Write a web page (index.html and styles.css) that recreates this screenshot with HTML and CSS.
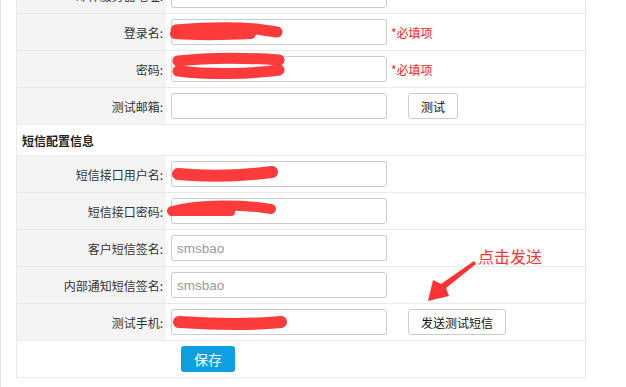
FILE: index.html
```html
<!DOCTYPE html>
<html>
<head>
    <title>短信配置</title>
    <link rel="stylesheet" href="styles.css">
</head>
<body>
    <div class="page">
        <div class="form-table">
            <div class="row">
                <div class="label">邮件服务器地址:</div>
                <div class="value"><input type="text" class="text-input"></div>
            </div>
            <div class="row">
                <div class="label">登录名:</div>
                <div class="value">
                    <div class="field">
                        <input type="text" class="text-input">
                        <svg class="scribble" width="216" height="26">
                            <path d="M5,11 C30,9 60,8 85,10 L106,13" stroke-width="11"/>
                            <path d="M4,15 C30,17 60,16 80,15" stroke-width="10"/>
                        </svg>
                    </div>
                    <span class="required">*必填项</span>
                </div>
            </div>
            <div class="row">
                <div class="label">密码:</div>
                <div class="value">
                    <div class="field">
                        <input type="password" class="text-input">
                        <svg class="scribble" width="216" height="26">
                            <path d="M7,5 C40,1 80,2 108,4" stroke-width="11"/>
                            <path d="M7,15 C40,19 80,18 108,14" stroke-width="11"/>
                        </svg>
                    </div>
                    <span class="required">*必填项</span>
                </div>
            </div>
            <div class="row">
                <div class="label">测试邮箱:</div>
                <div class="value">
                    <input type="text" class="text-input">
                    <button class="btn btn-test">测试</button>
                </div>
            </div>
            <div class="row section">短信配置信息</div>
            <div class="row">
                <div class="label">短信接口用户名:</div>
                <div class="value">
                    <div class="field">
                        <input type="text" class="text-input">
                        <svg class="scribble" width="216" height="26">
                            <path d="M7,13 C40,16 70,15 101,11" stroke-width="12"/>
                        </svg>
                    </div>
                </div>
            </div>
            <div class="row">
                <div class="label">短信接口密码:</div>
                <div class="value">
                    <div class="field">
                        <input type="password" class="text-input">
                        <svg class="scribble" width="216" height="26">
                            <path d="M1,13 C30,6 70,6 100,11" stroke-width="10"/>
                            <path d="M1,14 L60,14" stroke-width="8"/>
                        </svg>
                    </div>
                </div>
            </div>
            <div class="row">
                <div class="label">客户短信签名:</div>
                <div class="value"><input type="text" class="text-input" placeholder="smsbao"></div>
            </div>
            <div class="row">
                <div class="label">内部通知短信签名:</div>
                <div class="value"><input type="text" class="text-input" placeholder="smsbao"></div>
            </div>
            <div class="row">
                <div class="label">测试手机:</div>
                <div class="value">
                    <div class="field">
                        <input type="text" class="text-input">
                        <svg class="scribble" width="216" height="26">
                            <path d="M8,13 C40,15 80,16 110,13" stroke-width="12"/>
                        </svg>
                    </div>
                    <button class="btn btn-test">发送测试短信</button>
                </div>
            </div>
            <div class="row actions">
                <button class="btn-save">保存</button>
            </div>
        </div>

        <div class="note">点击发送</div>
        <svg class="arrow" width="64" height="50">
            <polygon points="54,5 56,8 26,32 29,40 8,45 13,24 21,28"/>
        </svg>
    </div>
</body>
</html>
```

FILE: styles.css
```css
body {
    margin: 0;
    padding: 0;
    background-color: #fff;
    font-family: "Noto Sans CJK SC", sans-serif;
    font-size: 12px;
    color: #333;
}

.page {
    position: relative;
    display: flex;
    flex-direction: column;
    height: 387px;
    padding-left: 15px;
    border-left: 1px solid #e8e8e8;
    box-sizing: border-box;
    overflow: hidden;
}

.form-table {
    width: 570px;
    margin-top: -23px;
    border: 1px solid #e6ebeb;
    border-top: none;
    box-sizing: border-box;
}

.row {
    display: flex;
    height: 36px;
    border-bottom: 1px solid #e6ebeb;
}

.row:last-child {
    border-bottom: none;
}

.label {
    display: flex;
    align-items: center;
    justify-content: flex-end;
    width: 149px;
    padding-right: 3px;
    background-color: #f4f4f4;
    box-sizing: border-box;
}

.value {
    display: flex;
    flex: 1;
    align-items: center;
    padding-left: 5px;
}

.field {
    position: relative;
    height: 26px;
}

.text-input {
    width: 216px;
    height: 26px;
    padding: 0 5px;
    border: 1px solid #ccc;
    border-radius: 3px;
    box-sizing: border-box;
    font-family: "Liberation Sans", sans-serif;
    font-size: 13.5px;
    color: #333;
    background-color: #fff;
}

.text-input::placeholder {
    color: #999;
}

.scribble {
    position: absolute;
    left: 0;
    top: 0;
    overflow: visible;
}

.scribble path {
    fill: none;
    stroke: #fd3b3b;
    stroke-linecap: round;
    stroke-linejoin: round;
}

.required {
    margin-left: 4px;
    color: #f22;
}

.btn {
    height: 26px;
    padding: 0 12px;
    border: 1px solid #ccc;
    border-radius: 3px;
    background-color: #fff;
    font-family: "Noto Sans CJK SC", sans-serif;
    font-size: 12px;
    color: #111;
}

.btn-test {
    margin-left: 21px;
}

.section {
    align-items: center;
    height: 30px;
    padding-left: 5px;
    font-weight: bold;
    color: #222;
}

.actions {
    align-items: center;
    padding-left: 164px;
}

.btn-save {
    width: 54px;
    height: 26px;
    border: none;
    border-radius: 3px;
    background-color: #0e9fe0;
    font-family: "Noto Sans CJK SC", sans-serif;
    font-size: 14px;
    color: #fff;
}

.note {
    position: absolute;
    left: 477px;
    top: 248px;
    font-size: 16px;
    line-height: 16px;
    color: #f33;
}

.arrow {
    position: absolute;
    left: 419px;
    top: 256px;
}

.arrow polygon {
    fill: #f33;
}
```
